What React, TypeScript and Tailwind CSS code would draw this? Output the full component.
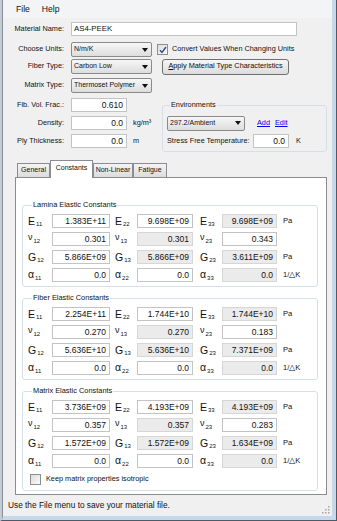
import React from "react";

type Cell = { s: string; sub: string; v: string; off?: boolean };
type Row = { cells: Cell[]; unit: string };

const lamina: Row[] = [
  { cells: [{ s: "E", sub: "11", v: "1.383E+11" }, { s: "E", sub: "22", v: "9.698E+09" }, { s: "E", sub: "33", v: "9.698E+09", off: true }], unit: "Pa" },
  { cells: [{ s: "ν", sub: "12", v: "0.301" }, { s: "ν", sub: "13", v: "0.301", off: true }, { s: "ν", sub: "23", v: "0.343" }], unit: "" },
  { cells: [{ s: "G", sub: "12", v: "5.866E+09" }, { s: "G", sub: "13", v: "5.866E+09", off: true }, { s: "G", sub: "23", v: "3.611E+09", off: true }], unit: "Pa" },
  { cells: [{ s: "α", sub: "11", v: "0.0" }, { s: "α", sub: "22", v: "0.0" }, { s: "α", sub: "33", v: "0.0", off: true }], unit: "1/△K" },
];

const fiber: Row[] = [
  { cells: [{ s: "E", sub: "11", v: "2.254E+11" }, { s: "E", sub: "22", v: "1.744E+10" }, { s: "E", sub: "33", v: "1.744E+10", off: true }], unit: "Pa" },
  { cells: [{ s: "ν", sub: "12", v: "0.270" }, { s: "ν", sub: "13", v: "0.270", off: true }, { s: "ν", sub: "23", v: "0.183" }], unit: "" },
  { cells: [{ s: "G", sub: "12", v: "5.636E+10" }, { s: "G", sub: "13", v: "5.636E+10", off: true }, { s: "G", sub: "23", v: "7.371E+09", off: true }], unit: "Pa" },
  { cells: [{ s: "α", sub: "11", v: "0.0" }, { s: "α", sub: "22", v: "0.0" }, { s: "α", sub: "33", v: "0.0", off: true }], unit: "1/△K" },
];

const matrix: Row[] = [
  { cells: [{ s: "E", sub: "11", v: "3.736E+09" }, { s: "E", sub: "22", v: "4.193E+09" }, { s: "E", sub: "33", v: "4.193E+09", off: true }], unit: "Pa" },
  { cells: [{ s: "ν", sub: "12", v: "0.357" }, { s: "ν", sub: "13", v: "0.357", off: true }, { s: "ν", sub: "23", v: "0.283" }], unit: "" },
  { cells: [{ s: "G", sub: "12", v: "1.572E+09" }, { s: "G", sub: "13", v: "1.572E+09", off: true }, { s: "G", sub: "23", v: "1.634E+09", off: true }], unit: "Pa" },
  { cells: [{ s: "α", sub: "11", v: "0.0" }, { s: "α", sub: "22", v: "0.0" }, { s: "α", sub: "33", v: "0.0", off: true }], unit: "1/△K" },
];

function Sym({ s, sub }: { s: string; sub: string }) {
  const big = s === "E" || s === "G";
  return (
    <div className="flex items-baseline">
      <span
        className={
          big
            ? "text-[10.5px] leading-none"
            : s === "α"
            ? "text-[10.5px] leading-none relative -top-[1px]"
            : "text-[9px] leading-none relative -top-[2px]"
        }
      >
        {s}
      </span>
      <span className="text-[6px] leading-none ml-[1px] relative top-[1px]">{sub}</span>
    </div>
  );
}

function Box({ v, w, off }: { v: string; w: string; off?: boolean }) {
  return (
    <div
      className={`${w} h-[14px] border text-right pr-[3px] leading-[12px] text-[8.5px] ${
        off ? "bg-[#ebebeb] border-[#d6d6d6]" : "bg-white border-[#c3c3c3]"
      }`}
    >
      {v}
    </div>
  );
}

function Arrow() {
  return (
    <svg width="6" height="4" viewBox="0 0 6 4" className="shrink-0">
      <path d="M0 0h6L3 4z" fill="#111" />
    </svg>
  );
}

function Select({ v, w }: { v: string; w: string }) {
  return (
    <div className={`${w} h-[15px] flex items-center justify-between pl-[2px] pr-[3px] border border-[#8a8a8a] rounded-[2px] bg-linear-to-b from-[#f7f7f7] to-[#dddddd] text-[7px]`}>
      <span className="whitespace-nowrap">{v}</span>
      <Arrow />
    </div>
  );
}

function Check({ on }: { on?: boolean }) {
  return (
    <div className="w-[11px] h-[11px] border border-[#8e8f8f] bg-linear-to-br from-[#dcdcdc] to-[#fbfbfb] flex items-center justify-center shrink-0">
      {on && (
        <svg width="8" height="8" viewBox="0 0 8 8">
          <path d="M1 4.2l2 2.2L7 1" fill="none" stroke="#31508f" strokeWidth="1.5" />
        </svg>
      )}
    </div>
  );
}

function Group({ title, rows, extra, mt }: { title: string; rows: Row[]; extra?: React.ReactNode; mt: string }) {
  return (
    <fieldset className={`${mt} border border-[#d5dfe5] rounded-[3px] pl-[5px] pt-[2px] pb-[2px]`}>
      <legend className="ml-[4px] px-[1px] text-[7.4px] leading-[10px]">{title}</legend>
      {rows.map((r, i) => (
        <div key={i} className="flex items-center h-[18px]">
          <div className="w-[24px]"><Sym s={r.cells[0].s} sub={r.cells[0].sub} /></div>
          <Box w="w-[58px]" v={r.cells[0].v} off={r.cells[0].off} />
          <div className="ml-[5px] w-[22px]"><Sym s={r.cells[1].s} sub={r.cells[1].sub} /></div>
          <Box w="w-[56px]" v={r.cells[1].v} off={r.cells[1].off} />
          <div className="ml-[7px] w-[22px]"><Sym s={r.cells[2].s} sub={r.cells[2].sub} /></div>
          <Box w="w-[55px]" v={r.cells[2].v} off={r.cells[2].off} />
          <div className="ml-[6px] text-[7.6px]">{r.unit}</div>
        </div>
      ))}
      {extra}
    </fieldset>
  );
}

function Tab({ label, w, sel }: { label: string; w: string; sel?: boolean }) {
  return sel ? (
    <div className={`${w} h-[18px] -mb-px relative z-10 bg-white border border-b-0 border-[#898c95] flex items-start justify-center pt-[2px] text-[7px] whitespace-nowrap`}>
      {label}
    </div>
  ) : (
    <div className={`${w} h-[14px] border border-b-0 border-[#898c95] bg-linear-to-b from-[#f4f4f4] to-[#dcdcdc] flex items-center justify-center text-[7px] whitespace-nowrap`}>
      {label}
    </div>
  );
}

export default function App() {
  return (
    <div className="w-[337px] h-[521px] border-r border-b border-[#515966] border-l-2 border-l-[#c3ccd6] font-['Liberation_Sans',Arial,sans-serif] text-[#111]">
      <div className="h-full border-r-4 border-b-4 border-[#c8d8eb] border-l border-l-[#868e98] bg-[#f0f0f0] flex flex-col">
        {/* menu */}
        <div className="h-[18px] flex items-center gap-[12px] pl-[13px] text-[8.6px] bg-[#f3f4f5]">
          <span>File</span>
          <span>Help</span>
        </div>

        {/* material rows */}
        <div className="mt-[4px] flex items-center h-[14px] text-[7.3px]">
          <div className="w-[61px] text-right">Material Name:</div>
          <div className="ml-[7px] w-[226px] h-[14px] bg-white border border-[#c3c3c3] pl-[2px] leading-[12px] text-[7.8px]">AS4-PEEK</div>
        </div>
        <div className="mt-[6px] flex items-center h-[15px] text-[7.3px]">
          <div className="w-[61px] text-right">Choose Units:</div>
          <div className="ml-[7px]"><Select w="w-[81px]" v="N/m/K" /></div>
          <div className="ml-[5px]"><Check on /></div>
          <span className="ml-[4px] whitespace-nowrap">Convert Values When Changing Units</span>
        </div>
        <div className="mt-[1px] flex items-center h-[17px] text-[7.3px]">
          <div className="w-[61px] text-right">Fiber Type:</div>
          <div className="ml-[7px]"><Select w="w-[81px]" v="Carbon Low" /></div>
          <div className="ml-[10px] w-[127px] h-[16px] border border-[#707070] rounded-[3px] bg-linear-to-b from-[#f6f6f6] to-[#dcdcdc] flex items-center justify-center whitespace-nowrap">
            <span><span className="underline">A</span>pply Material Type Characteristics</span>
          </div>
        </div>
        <div className="mt-[3px] flex items-center h-[15px] text-[7.3px]">
          <div className="w-[61px] text-right">Matrix Type:</div>
          <div className="ml-[7px]"><Select w="w-[81px]" v="Thermoset Polymer" /></div>
        </div>

        {/* properties + environments */}
        <div className="mt-[3px] flex text-[7.3px]">
          <div className="w-[159px]">
            {[
              ["Fib. Vol. Frac.:", "0.610", ""],
              ["Density:", "0.0", "kg/m³"],
              ["Ply Thickness:", "0.0", "m"],
            ].map(([l, v, u]) => (
              <div key={l} className="flex items-center h-[18px]">
                <div className="w-[61px] text-right">{l}</div>
                <div className="ml-[7px]"><Box w="w-[56px]" v={v} /></div>
                <div className="ml-[6px]">{u}</div>
              </div>
            ))}
          </div>
          <fieldset className="mt-[4px] w-[165px] border border-[#d5dfe5] rounded-[3px] pl-[4px] pt-[4px] pb-[1px]">
            <legend className="ml-[3px] px-[1px] leading-[10px]">Environments</legend>
            <div className="flex items-center h-[18px]">
              <Select w="w-[78px]" v="297.2/Ambient" />
              <span className="ml-[12px] text-[#0000ee] underline">Add</span>
              <span className="ml-[5px] text-[#0000ee] underline">Edit</span>
            </div>
            <div className="flex items-center h-[18px]">
              <div className="w-[86px] whitespace-nowrap">Stress Free Temperature:</div>
              <Box w="w-[36px]" v="0.0" />
              <span className="ml-[7px]">K</span>
            </div>
          </fieldset>
        </div>

        {/* tabs */}
        <div className="mt-[8px] ml-[14px] h-[17px] flex items-end">
          <Tab label="General" w="w-[33px]" />
          <Tab label="Constants" w="w-[43px]" sel />
          <Tab label="Non-Linear" w="w-[40px]" />
          <Tab label="Fatigue" w="w-[34px]" />
        </div>
        <div className="ml-[12px] w-[312px] border border-[#898c95] bg-white pt-[22px] pl-[6px] pr-[8px] pb-[3px]">
          <Group mt="mt-0" title="Lamina Elastic Constants" rows={lamina} />
          <Group mt="mt-[6px]" title="Fiber Elastic Constants" rows={fiber} />
          <Group
            mt="mt-[6px]"
            title="Matrix Elastic Constants"
            rows={matrix}
            extra={
              <div className="flex items-center h-[18px] pl-[2px] text-[7.3px]">
                <Check />
                <span className="ml-[5px]">Keep matrix properties isotropic</span>
              </div>
            }
          />
        </div>

        {/* status */}
        <div className="flex-1 flex items-center justify-between pl-[5px] pr-[2px] text-[8.3px]">
          <span>Use the File menu to save your material file.</span>
          <svg width="10" height="10" viewBox="0 0 10 10" className="self-end mb-[2px]">
            {[[8, 8], [5, 8], [2, 8], [8, 5], [5, 5], [8, 2]].map(([x, y]) => (
              <rect key={`${x}-${y}`} x={x} y={y} width="1.5" height="1.5" fill="#a5a5a5" />
            ))}
          </svg>
        </div>
      </div>
    </div>
  );
}
